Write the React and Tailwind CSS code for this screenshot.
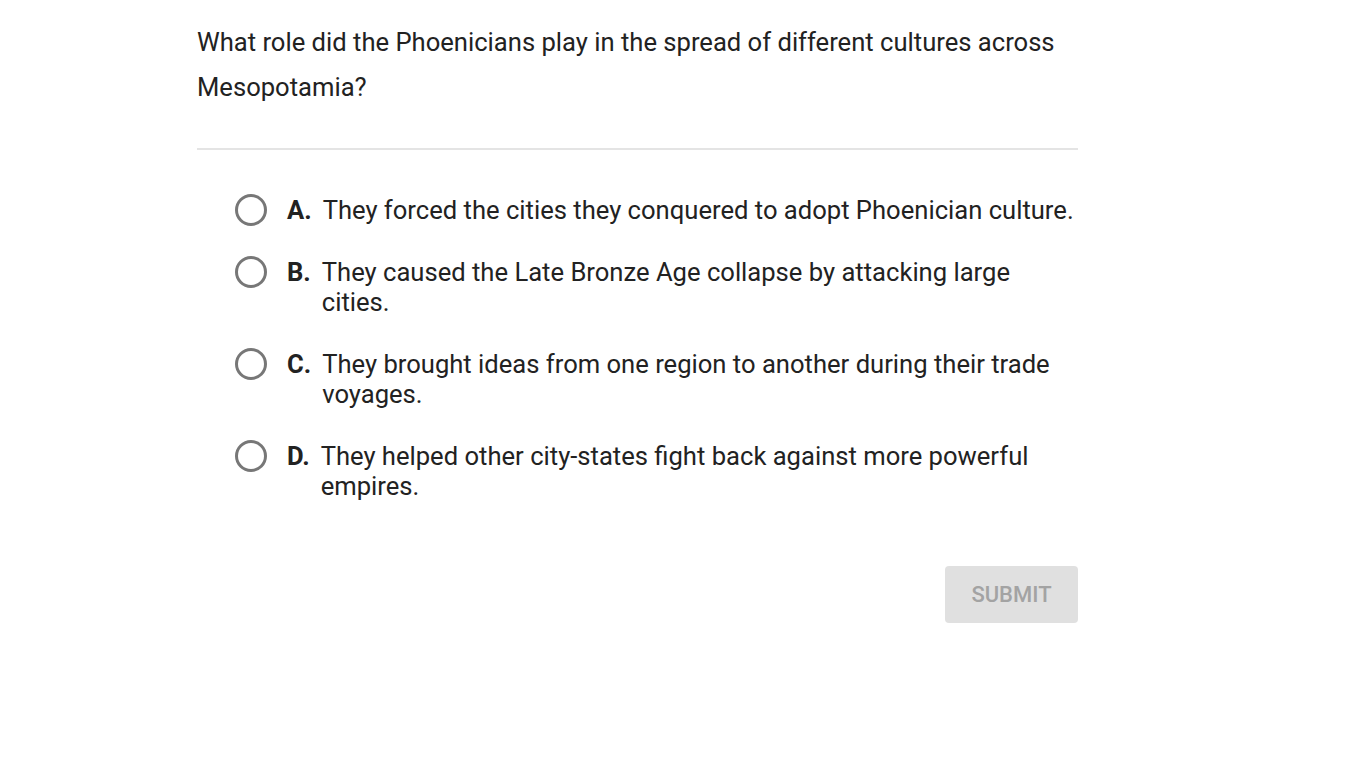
const options = [
  { letter: "A.", text: "They forced the cities they conquered to adopt Phoenician culture." },
  { letter: "B.", text: "They caused the Late Bronze Age collapse by attacking large cities." },
  { letter: "C.", text: "They brought ideas from one region to another during their trade voyages." },
  { letter: "D.", text: "They helped other city-states fight back against more powerful empires." },
];

function Radio() {
  return (
    <span className="flex h-[30px] w-[32px] shrink-0 items-center justify-center">
      <span className="block h-[32px] w-[32px] rounded-full border-[3px] border-[#777777] bg-white" />
    </span>
  );
}

export default function App() {
  return (
    <div className="min-h-screen bg-white font-['Roboto',sans-serif] text-[#222222]">
      <div className="ml-[197px] w-[881px] pt-[20px]">
        <p className="text-[25.6px] leading-[45px]">
          What role did the Phoenicians play in the spread of different cultures across Mesopotamia?
        </p>

        <div className="mt-[38px] h-[2px] bg-[#e4e4e4]" />

        <div className="mt-[45px] flex flex-col gap-[32px] pl-[38px]">
          {options.map((o) => (
            <label key={o.letter} className="flex cursor-pointer items-start">
              <Radio />
              <span className="ml-[20px] flex text-[25.6px] leading-[30px]">
                <span className="mr-[11px] font-bold">{o.letter}</span>
                <span>{o.text}</span>
              </span>
            </label>
          ))}
        </div>

        <div className="mt-[65px] flex justify-end">
          <button
            disabled
            className="h-[57px] w-[133px] rounded-[4px] bg-[#e0e0e0] text-[22px] font-medium text-[#a3a3a3]"
          >
            SUBMIT
          </button>
        </div>
      </div>
    </div>
  );
}
